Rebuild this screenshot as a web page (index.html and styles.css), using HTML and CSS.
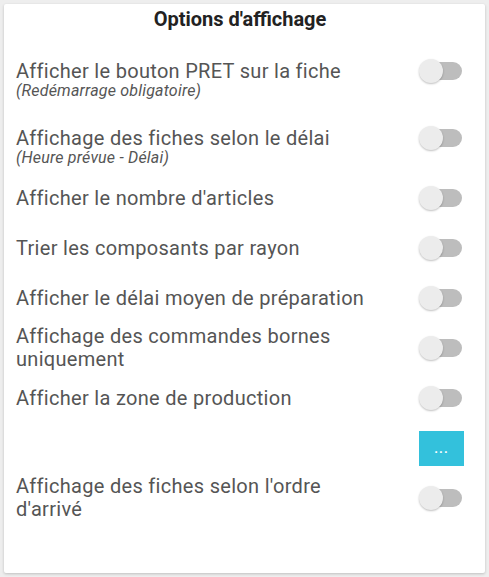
FILE: index.html
```html
<!DOCTYPE html>
<html lang="fr">

<head>
    <meta charset="UTF-8">
    <meta name="viewport" content="width=device-width, initial-scale=1.0">
    <title>Options d'affichage</title>
    <link rel="stylesheet" href="styles.css">
</head>

<body>
    <div class="card">
        <h2 class="card-title">Options d'affichage</h2>

        <div class="option option-sub">
            <div class="option-row">
                <span class="label">Afficher le bouton PRET sur la fiche</span>
                <span class="switch"></span>
            </div>
            <div class="hint">(Redémarrage obligatoire)</div>
        </div>

        <div class="option option-sub">
            <div class="option-row">
                <span class="label">Affichage des fiches selon le délai</span>
                <span class="switch"></span>
            </div>
            <div class="hint">(Heure prévue - Délai)</div>
        </div>

        <div class="option">
            <div class="option-row">
                <span class="label">Afficher le nombre d'articles</span>
                <span class="switch"></span>
            </div>
        </div>

        <div class="option">
            <div class="option-row">
                <span class="label">Trier les composants par rayon</span>
                <span class="switch"></span>
            </div>
        </div>

        <div class="option">
            <div class="option-row">
                <span class="label">Afficher le délai moyen de préparation</span>
                <span class="switch"></span>
            </div>
        </div>

        <div class="option">
            <div class="option-row">
                <span class="label">Affichage des commandes bornes uniquement</span>
                <span class="switch"></span>
            </div>
        </div>

        <div class="option">
            <div class="option-row">
                <span class="label">Afficher la zone de production</span>
                <span class="switch"></span>
            </div>
        </div>

        <div class="option option-action">
            <button class="btn-more" type="button">...</button>
        </div>

        <div class="option">
            <div class="option-row">
                <span class="label">Affichage des fiches selon l'ordre d'arrivé</span>
                <span class="switch"></span>
            </div>
        </div>
    </div>
</body>

</html>
```

FILE: styles.css
```css
* {
    box-sizing: border-box;
}

body {
    margin: 0;
    padding: 4px;
    background-color: #eeeeee;
    font-family: Roboto, "Liberation Sans", sans-serif;
}

.card {
    height: 569px;
    background: #fff;
    border-radius: 2px;
    box-shadow: 0 1px 3px rgba(0, 0, 0, 0.2);
    padding: 0 21px 0 12px;
}

.card-title {
    margin: 0;
    padding: 4px 0 9px;
    font-size: 20px;
    line-height: 22px;
    font-weight: bold;
    text-align: center;
    color: #222;
}

.option {
    min-height: 50px;
    display: flex;
    flex-direction: column;
    justify-content: center;
}

.option-sub {
    min-height: 66px;
    justify-content: flex-start;
    padding: 20px 0 8px;
}

.option-row {
    display: flex;
    align-items: center;
    justify-content: space-between;
}

.label {
    width: 360px;
    font-size: 20px;
    line-height: 23px;
    letter-spacing: 0.3px;
    color: #555;
}

.hint {
    font-size: 16px;
    line-height: 15px;
    letter-spacing: 0.2px;
    font-style: italic;
    color: #555;
}

.switch {
    position: relative;
    width: 45px;
    height: 24px;
    flex-shrink: 0;
}

.switch::before {
    content: "";
    position: absolute;
    right: 2px;
    top: 3px;
    width: 32px;
    height: 18px;
    border-radius: 9px;
    background-color: #bdbdbd;
}

.switch::after {
    content: "";
    position: absolute;
    left: 0;
    top: 0;
    width: 24px;
    height: 24px;
    border-radius: 50%;
    background-color: #ececec;
    box-shadow: 0 1px 2px rgba(0, 0, 0, 0.25);
}

.option-action {
    align-items: flex-end;
}

.btn-more {
    width: 45px;
    height: 35px;
    border: none;
    border-radius: 0;
    background-color: #33c1dc;
    color: #fff;
    font-family: Roboto, sans-serif;
    font-size: 13px;
    font-weight: bold;
    letter-spacing: 1px;
    cursor: pointer;
}
```
